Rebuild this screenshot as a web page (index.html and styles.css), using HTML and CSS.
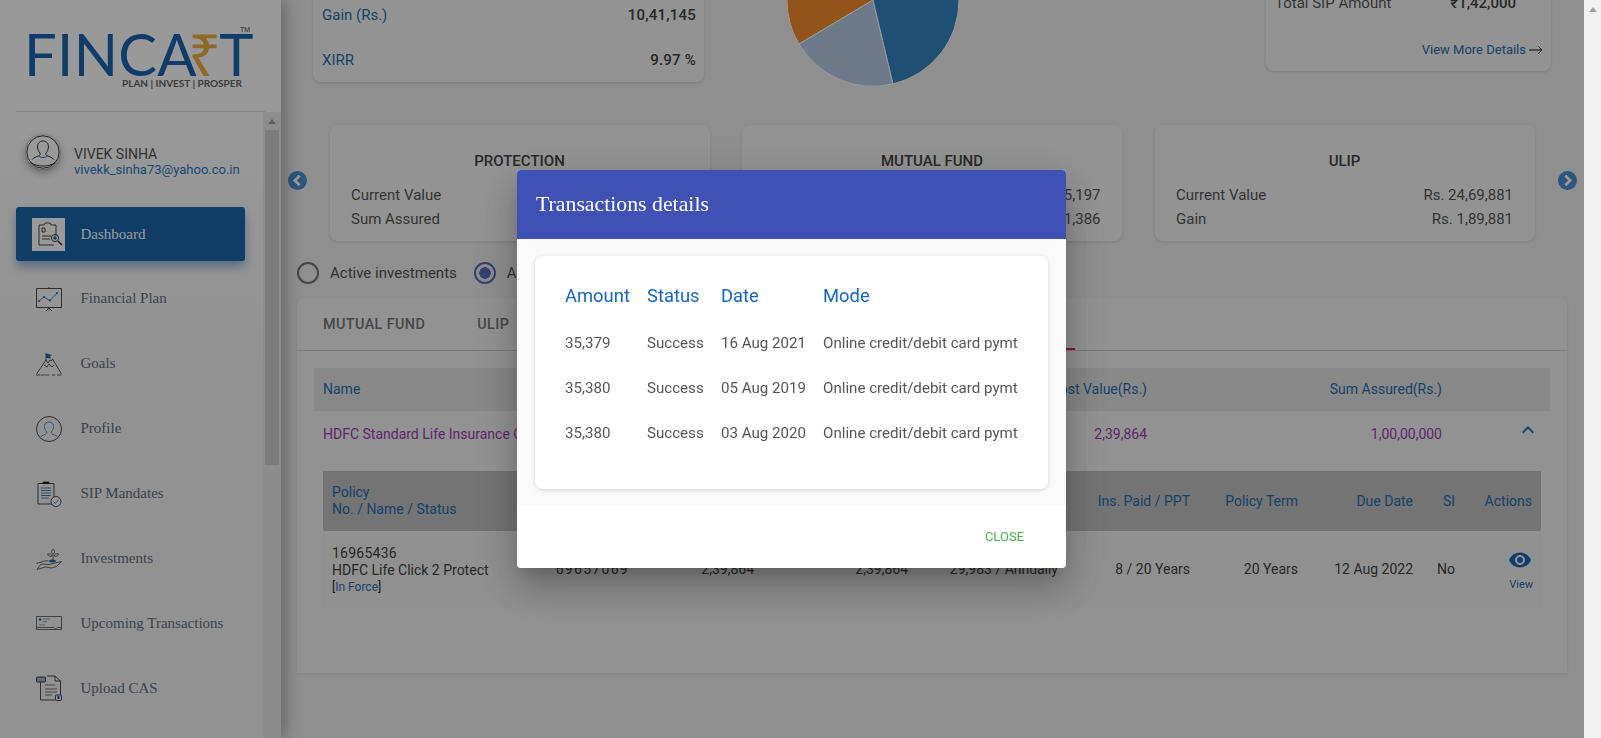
FILE: index.html
```html
<html>
<head>
  <meta name="viewport" content="width=device-width, initial-scale=1"/>
  <title>Fincart - Transactions details</title>
  <link rel="stylesheet" href="styles.css">
</head>
<body>
<div class="shell">
  <aside class="sidebar">
    <div class="logo">
      <div class="logo-mark">FINCA<span class="logo-rupee">₹</span>T<span class="logo-tm">TM</span></div>
      <div class="logo-tag">PLAN | INVEST | PROSPER</div>
    </div>
    <div class="side-body">
      <div class="side-content">
        <div class="profile">
          <div class="avatar">
            <svg viewBox="0 0 34 34" width="34" height="34" fill="none" stroke="#222" stroke-width="0.9">
              <circle cx="17" cy="17" r="16.2"/>
              <path d="M17 6c-3.6 0-5.6 2.6-5.4 6 .1 2.4 1 4.6 2.4 6 .5 1 .2 2-.8 2.6-2.6 1.2-5.4 1.6-7 4"/>
              <path d="M17 6c3.6 0 5.6 2.6 5.4 6-.1 2.4-1 4.6-2.4 6-.5 1-.2 2 .8 2.6 2.6 1.2 5.4 1.6 7 4"/>
              <path d="M13 21c1 2 7 2 8 0" stroke="#1a65ae"/>
              <path d="M5 27.500c3 2.500 7.500 3.500 12 3.500s9-1 12-3.500"/>
            </svg>
          </div>
          <div class="profile-text">
            <div class="profile-name">VIVEK SINHA</div>
            <div class="profile-mail">vivekk_sinha73@yahoo.co.in</div>
          </div>
        </div>
        <nav class="nav">
          <a class="nav-item nav-active">
            <span class="nav-tile">
              <svg viewBox="0 0 28 28" width="28" height="28" fill="none" stroke="#333" stroke-width="0.9">
                <path d="M4 5h5l1-2h5l1 2h5v11M4 5v20h15"/>
                <path d="M7 8h3v4H7zM7 16h9M7 19h8"/>
                <circle cx="20" cy="18" r="3.600"/>
                <circle cx="20" cy="18" r="1.700" fill="#1a65ae" stroke="none"/>
                <path d="M23 21l4 4" stroke-width="1.600"/>
              </svg>
            </span>
            Dashboard
          </a>
          <a class="nav-item">
            <span class="nav-icon">
              <svg viewBox="0 0 26 26" width="26" height="26" fill="none" stroke="#222" stroke-width="0.8">
                <path d="M0.500 2.500h25v19H0.500zM13 1v1.500M13 21.500v3M10 25l3-3 3 3"/>
                <path d="M3 15l5-4 6 3.500L21 7" stroke="#1a65ae"/>
                <circle cx="3" cy="15" r="1" fill="#1a65ae" stroke="none"/>
                <circle cx="8" cy="11" r="1" fill="#1a65ae" stroke="none"/>
                <circle cx="14" cy="14.500" r="1" fill="#1a65ae" stroke="none"/>
                <circle cx="21" cy="7" r="1" fill="#1a65ae" stroke="none"/>
              </svg>
            </span>
            Financial Plan
          </a>
          <a class="nav-item">
            <span class="nav-icon">
              <svg viewBox="0 0 26 26" width="26" height="26" fill="none" stroke="#333" stroke-width="0.8">
                <path d="M0.500 23L10 9V2M10 9l2 3 2-3 1.500 1 1-2 9 15"/>
                <path d="M8 14l3 2 2-3 3 3 2-2"/>
                <path d="M0 24h14M16 24h3M21 24h5" stroke-dasharray="4 0.600"/>
                <path d="M10 2.500l6 1.500-2 1.500 1 2-5-.5z" fill="#1a65ae" stroke="none"/>
              </svg>
            </span>
            Goals
          </a>
          <a class="nav-item">
            <span class="nav-icon">
              <svg viewBox="0 0 26 26" width="26" height="26" fill="none" stroke="#222" stroke-width="0.8">
                <circle cx="13" cy="13" r="12.500"/>
                <path d="M13 6c-3 0-4.500 2-4.500 4.500 0 2 .8 4 2 5.200.4 1.200-.2 2-1 2.500-1.500 1-4 1.300-5 2.800M13 6c3 0 4.500 2 4.500 4.500 0 2-.8 4-2 5.200-.4 1.200.2 2 1 2.500 1.500 1 4 1.300 5 2.800" stroke="#1a65ae" stroke-dasharray="3 0.600"/>
              </svg>
            </span>
            Profile
          </a>
          <a class="nav-item">
            <span class="nav-icon">
              <svg viewBox="0 0 26 26" width="26" height="26" fill="none" stroke="#222" stroke-width="0.8">
                <path d="M2 2.500h16v20.500H2z"/>
                <path d="M7 2.500V1h6v1.500z" fill="#222"/>
                <path d="M5 7h10M5 9.500h10M5 12h10M5 14.500h10M5 17h8" stroke="#1a65ae"/>
                <circle cx="20" cy="20.500" r="5" fill="#fff"/>
                <path d="M17.500 20.500l2 2 3-4" stroke="#1a65ae"/>
              </svg>
            </span>
            SIP Mandates
          </a>
          <a class="nav-item">
            <span class="nav-icon">
              <svg viewBox="0 0 26 26" width="26" height="26" fill="none" stroke="#333" stroke-width="0.7">
                <path d="M17 15V9M17 9c-2-1-2-3 0-5 2 2 2 4 0 5zM16 11c-2 1-4 0-4.500-2 2-.7 4 0 4.500 2zM18 11c2 1 4 0 4.500-2-2-.7-4 0-4.500 2z"/>
                <path d="M13 16c1-1.500 6-1.500 7 0-1 1.500-6 1.500-7 0z" fill="#1a65ae" stroke="#1a65ae"/>
                <path d="M0.500 18.500l5-1.500c2-1 5-1.500 7-1M5 19l8 .5 12.500-3-5 5-5 1.500-6-1-8.500 2.500z"/>
              </svg>
            </span>
            Investments
          </a>
          <a class="nav-item">
            <span class="nav-icon">
              <svg viewBox="0 0 26 26" width="26" height="26" fill="none" stroke="#333" stroke-width="0.7">
                <path d="M0.500 6.500h25v13H0.500zM0.500 17.500h17c1 0 1 1.500 2 1.500s1-1.500 2-1.500h4"/>
                <circle cx="4" cy="9.500" r="1.200" fill="#1a65ae" stroke="none"/>
                <path d="M7 9h7M7 11.500h4M3 15h6" stroke="#777"/>
              </svg>
            </span>
            Upcoming Transactions
          </a>
          <a class="nav-item">
            <span class="nav-icon">
              <svg viewBox="0 0 26 26" width="26" height="26" fill="none" stroke="#222" stroke-width="0.8">
                <path d="M4.500 4V25h15M11 1h8l5.500 5v14M19 1v5h5.500"/>
                <path d="M9 10h10M9 14h12M9 17h12M9 20h7" stroke="#555"/>
                <rect x="0.500" y="2" width="9" height="5" rx="1" fill="#9db6d0"/>
                <rect x="19.500" y="20" width="6" height="5.500" rx="1"/>
                <rect x="21.500" y="21" width="2" height="3" fill="#1a65ae" stroke="none"/>
              </svg>
            </span>
            Upload CAS
          </a>
        </nav>
      </div>
      <div class="side-track">
        <span class="track-arrow"></span>
        <div class="side-thumb"></div>
      </div>
    </div>
  </aside>

  <main class="main">
    <section class="summary">
      <div class="summary-card summary-left">
        <div class="summary-row"><span class="summary-label">Gain (Rs.)</span><b>10,41,145</b></div>
        <div class="summary-row"><span class="summary-label">XIRR</span><b>9.97 %</b></div>
      </div>
      <svg class="pie" viewBox="787 -40 172 126" width="172" height="126">
        <path d="M873 0L799 44A86 86 0 0 1 787 0V-40H873z" fill="#f38c2a" stroke="#fff"/>
        <path d="M873 0L893 84A86 86 0 0 1 799 44z" fill="#b4cbe6" stroke="#fff"/>
        <path d="M873 0V-40H959V0A86 86 0 0 1 893 84z" fill="#3485c0" stroke="#fff"/>
      </svg>
      <div class="summary-card summary-right">
        <div class="sip-row"><span>Total SIP Amount</span><b>₹1,42,000</b></div>
        <a class="more-link">View More Details
          <svg viewBox="0 0 14 10" width="14" height="10" fill="none" stroke="#111" stroke-width="1"><path d="M0 5h13M9 1l4 4-4 4"/></svg>
        </a>
      </div>
    </section>

    <section class="carousel">
      <svg class="arrow" viewBox="0 0 18 18" width="19" height="19"><circle cx="9" cy="9" r="9" fill="#4c8fd0"/><path d="M11 4.500L6.500 9l4.500 4.500" fill="none" stroke="#fff" stroke-width="2.600"/></svg>
      <div class="asset-card">
        <h3>PROTECTION</h3>
        <div class="asset-row"><span>Current Value</span><span>Rs. 2,39,864</span></div>
        <div class="asset-row"><span>Sum Assured</span><span>Rs. 1,00,00,000</span></div>
      </div>
      <div class="asset-card">
        <h3>MUTUAL FUND</h3>
        <div class="asset-row"><span>Current Value</span><span>Rs. 14,35,197</span></div>
        <div class="asset-row"><span>Gain</span><span>Rs. 8,51,386</span></div>
      </div>
      <div class="asset-card">
        <h3>ULIP</h3>
        <div class="asset-row"><span>Current Value</span><span>Rs. 24,69,881</span></div>
        <div class="asset-row"><span>Gain</span><span>Rs. 1,89,881</span></div>
      </div>
      <svg class="arrow" viewBox="0 0 18 18" width="19" height="19"><circle cx="9" cy="9" r="9" fill="#4c8fd0"/><path d="M7 4.500L11.500 9 7 13.500" fill="none" stroke="#fff" stroke-width="2.600"/></svg>
    </section>

    <section class="radios">
      <label class="radio"><span class="radio-dot"></span>Active investments</label>
      <label class="radio"><span class="radio-dot radio-on"></span>All investments</label>
    </section>

    <section class="tabs-card">
      <div class="tabs">
        <span class="tab">MUTUAL FUND</span>
        <span class="tab">ULIP</span>
        <span class="tab tab-active">PROTECTION</span>
      </div>
      <div class="tab-body">
        <div class="plan-grid plan-head">
          <span>Name</span>
          <span class="num">Cost Value(Rs.)</span>
          <span class="num">Sum Assured(Rs.)</span>
          <span></span>
        </div>
        <div class="plan-grid plan-row">
          <span>HDFC Standard Life Insurance Co. Ltd.</span>
          <span class="num">2,39,864</span>
          <span class="num">1,00,00,000</span>
          <svg class="chevron" viewBox="0 0 24 24" width="24" height="24"><path d="M12 8l-6 6 1.410 1.410L12 10.830l4.590 4.580L18 14z"/></svg>
        </div>
        <div class="policy">
          <div class="policy-grid policy-head">
            <span>Policy<br>No. / Name / Status</span>
            <span class="num">Application No.</span>
            <span class="num">Invested</span>
            <span class="num">Current Value</span>
            <span class="num">Premium / Mode</span>
            <span class="num">Ins. Paid / PPT</span>
            <span class="num">Policy Term</span>
            <span class="num">Due Date</span>
            <span class="num">SI</span>
            <span class="num">Actions</span>
          </div>
          <div class="policy-grid policy-row">
            <span><span class="policy-no">16965436</span><br>HDFC Life Click 2 Protect<br><small>[<i>In Force</i>]</small></span>
            <span class="num policy-app">69657069</span>
            <span class="num">2,39,864</span>
            <span class="num">2,39,864</span>
            <span class="num">29,983 / Annually</span>
            <span class="num">8 / 20 Years</span>
            <span class="num">20 Years</span>
            <span class="num">12 Aug 2022</span>
            <span class="num">No</span>
            <span class="view">
              <svg viewBox="0 0 24 24" width="24" height="24"><path d="M12 4.500C7 4.500 2.730 7.610 1 12c1.730 4.390 6 7.500 11 7.500s9.270-3.110 11-7.500c-1.730-4.390-6-7.500-11-7.500zM12 17c-2.760 0-5-2.240-5-5s2.240-5 5-5 5 2.240 5 5-2.240 5-5 5zm0-8c-1.660 0-3 1.340-3 3s1.340 3 3 3 3-1.340 3-3-1.340-3-3-3z"/></svg>
              View
            </span>
          </div>
        </div>
      </div>
    </section>
  </main>
  <div class="page-track"><span class="track-arrow"></span></div>
</div>

<div class="backdrop">
  <div class="modal">
    <h2 class="modal-title">Transactions details</h2>
    <div class="modal-body">
      <div class="modal-card">
        <table class="tx-table">
          <tr><th>Amount</th><th>Status</th><th>Date</th><th>Mode</th></tr>
          <tr><td>35,379</td><td>Success</td><td>16 Aug 2021</td><td>Online credit/debit card pymt</td></tr>
          <tr><td>35,380</td><td>Success</td><td>05 Aug 2019</td><td>Online credit/debit card pymt</td></tr>
          <tr><td>35,380</td><td>Success</td><td>03 Aug 2020</td><td>Online credit/debit card pymt</td></tr>
        </table>
      </div>
    </div>
    <div class="modal-foot"><a class="close-btn">CLOSE</a></div>
  </div>
</div>
</body>
</html>
```

FILE: styles.css
```css
html, body {
  margin: 0;
  height: 100%;
  overflow: hidden;
}

body {
  font-family: 'Roboto', sans-serif;
  font-size: 14px;
  color: #555;
  background: #eee;
}

.shell {
  display: flex;
  height: 738px;
  overflow: hidden;
}

/* sidebar */
.sidebar {
  width: 281px;
  flex: none;
  background: #fff;
  box-shadow: 4px 0 16px rgba(0, 0, 0, 0.3);
  position: relative;
  z-index: 2;
  display: flex;
  flex-direction: column;
}

.logo {
  height: 111px;
  margin-left: 16px;
  width: 249px;
  border-bottom: 1px solid #ddd;
}

.logo-mark {
  position: relative;
  padding: 26px 0 0 8px;
  font-family: 'Lato', sans-serif;
  font-size: 58px;
  line-height: 56px;
  letter-spacing: 0.3px;
  color: #1a65ae;
  white-space: nowrap;
}

.logo-rupee {
  color: #f0b040;
  font-family: 'Open Sans', sans-serif;
  margin: 0 -2px 0 -9px;
}

.logo-tm {
  position: absolute;
  top: 26px;
  left: 224px;
  font-size: 7px;
  line-height: 8px;
  letter-spacing: 0;
  color: #444;
  font-family: 'Liberation Sans', sans-serif;
}

.logo-tag {
  margin: -5px 0 0 106px;
  font-family: 'Lato', sans-serif;
  font-weight: bold;
  font-size: 10px;
  line-height: 12px;
  color: #666;
  white-space: nowrap;
}

.side-body {
  flex: 1;
  display: flex;
  min-height: 0;
  background: linear-gradient(#fff, #f3f3f3 300px);
}

.side-content {
  flex: 1;
  min-width: 0;
}

.side-track {
  width: 18px;
  flex: none;
  background: #ebebeb;
  display: flex;
  flex-direction: column;
  align-items: center;
}

.track-arrow {
  display: block;
  margin: 7px 0 6px;
  border: 4px solid transparent;
  border-top: 0;
  border-bottom: 5px solid #a0a0a0;
}

.side-thumb {
  width: 14px;
  height: 335px;
  background: #cfcfcf;
}

.profile {
  display: flex;
  padding: 23px 0 0 26px;
  height: 72px;
}

.avatar {
  width: 34px;
  height: 34px;
  border-radius: 50%;
  background: #fff;
  box-shadow: 0 3px 8px rgba(0, 0, 0, 0.4), 0 0 0 1px #eee;
}

.avatar svg {
  display: block;
}

.profile-text {
  margin: 11px 0 0 14px;
  line-height: 17px;
  white-space: nowrap;
}

.profile-name {
  font-size: 14px;
  color: #555;
}

.profile-mail {
  margin-top: -2px;
  font-size: 13px;
  color: #2d7cc4;
}

.nav {
  display: flex;
  flex-direction: column;
  gap: 10.9px;
  margin: 0 18px 0 16px;
}

.nav-item {
  display: flex;
  align-items: center;
  flex: none;
  height: 54px;
  font-family: 'Liberation Serif', serif;
  font-size: 15px;
  color: #667080;
  white-space: nowrap;
}

.nav-icon {
  width: 26px;
  height: 26px;
  margin: 0 18.5px 0 20px;
  flex: none;
}

.nav-icon svg,
.nav-tile svg {
  display: block;
}

.nav-active {
  background: #1a66ae;
  color: #fff;
  border-radius: 3px;
  box-shadow: 0 6px 10px rgba(26, 102, 174, 0.45);
}

.nav-tile {
  width: 33px;
  height: 33px;
  margin: 0 15.5px 0 16px;
  background: #fff;
  display: flex;
  align-items: center;
  justify-content: center;
  flex: none;
}

/* main area */
.main {
  flex: 1;
  min-width: 0;
}

.page-track {
  width: 17px;
  flex: none;
  background: #f1f1f1;
  position: relative;
  z-index: 20;
  display: flex;
  flex-direction: column;
  align-items: center;
}

.summary {
  display: flex;
  align-items: flex-start;
  margin-top: -40px;
  padding-left: 32px;
  height: 126px;
}

.summary-card {
  box-sizing: border-box;
  background: #f6f6f6;
  border-radius: 8px;
  box-shadow: 0 1px 3px rgba(0, 0, 0, 0.12);
}

.summary-left {
  width: 391px;
  height: 122px;
  padding: 32px 8px 0 9px;
}

.summary-row {
  display: flex;
  justify-content: space-between;
  align-items: center;
  height: 45px;
  font-size: 15px;
}

.summary-row b {
  font-weight: 500;
  letter-spacing: 0.2px;
  color: #444;
}

.summary-label {
  color: #2a6fb0;
}

.pie {
  margin-left: 83px;
  flex: none;
}

.summary-right {
  width: 285px;
  height: 111px;
  margin-left: 307px;
  padding: 35px 25px 0 9px;
  color: #555;
  font-size: 15px;
}

.sip-row {
  display: flex;
  justify-content: space-between;
  padding-right: 10px;
  line-height: 17px;
  height: 47px;
}

.sip-row b {
  font-weight: 500;
  color: #444;
}

.more-link {
  display: flex;
  align-items: center;
  justify-content: flex-end;
  gap: 3px;
  margin-right: -17px;
  font-size: 13px;
  line-height: 15px;
  color: #2a6fb0;
}

.carousel {
  display: flex;
  align-items: center;
  gap: 32.5px;
  margin-top: 39px;
  padding-left: 7px;
}

.arrow {
  flex: none;
  margin-top: -6px;
}

.carousel .arrow:first-child {
  margin-right: -10px;
}

.carousel .arrow:last-child {
  margin-left: -9px;
}

.asset-card {
  box-sizing: border-box;
  width: 380px;
  height: 116px;
  flex: none;
  padding: 28px 21.5px 0;
  background: #f6f6f6;
  border-radius: 8px;
  box-shadow: 0 1px 3px rgba(0, 0, 0, 0.12);
}

.asset-card h3 {
  margin: 0 0 14px;
  text-align: center;
  font-size: 15px;
  line-height: 17px;
  font-weight: 500;
  color: #444;
}

.asset-row {
  display: flex;
  justify-content: space-between;
  font-size: 15px;
  line-height: 23.5px;
}

.radios {
  display: flex;
  gap: 17px;
  margin: 20px 0 14px 16px;
  padding-top: 1px;
}

.radio {
  display: flex;
  align-items: center;
  gap: 11px;
  font-size: 15px;
  line-height: 22px;
}

.radio-dot {
  box-sizing: border-box;
  width: 22px;
  height: 22px;
  border: 2px solid #777;
  border-radius: 50%;
}

.radio-on {
  border-color: #5c6bc0;
  background: radial-gradient(circle, #5c6bc0 0 5.5px, transparent 6px);
}

.tabs-card {
  box-sizing: border-box;
  width: 1270px;
  height: 375px;
  margin-left: 16px;
  background: #f4f4f4;
  border-radius: 8px 8px 0 0;
  box-shadow: 0 1px 3px rgba(0, 0, 0, 0.1);
}

.tabs {
  display: flex;
  align-items: center;
  gap: 52px;
  height: 52px;
  padding: 0 492px 0 26px;
  border-bottom: 1px solid #ccc;
}

.tab {
  font-size: 14.4px;
  font-weight: 500;
  color: #777;
  letter-spacing: 0.4px;
}

.tab-active {
  margin-left: auto;
  padding: 0 30px;
  color: #d81b60;
  line-height: 52px;
  box-shadow: inset 0 -2px 0 #e91e63;
}

.tab-body {
  padding: 17px 17px 0;
}

.plan-grid {
  display: grid;
  grid-template-columns: 586px 247px 295px 108px;
  align-items: center;
}

.plan-head {
  box-sizing: border-box;
  height: 43px;
  padding-bottom: 2px;
  background: #e3e3e3;
  color: #2a6fb0;
  font-size: 14px;
}

.plan-head > :first-child,
.plan-row > :first-child {
  padding-left: 9px;
  white-space: nowrap;
}

.plan-row {
  height: 46px;
  color: #a13fb4;
  font-size: 14px;
}

.num {
  text-align: right;
}

.chevron {
  margin: -8px 0 0 74px;
  fill: #2a6fb0;
}

.policy {
  margin: 14px 9px 0;
}

.policy-grid {
  display: grid;
  grid-template-columns: 217px 89px 125px 154px 150px 132px 108px 115px 42px 86px;
  align-items: center;
}

.policy-head {
  height: 60px;
  background: #c1c1c1;
  color: #2a6fb0;
  line-height: 17px;
  font-size: 14px;
}

.policy-head > :first-child,
.policy-row > :first-child {
  padding-left: 9px;
}

.policy-head > :last-child,
.policy-row > :last-child {
  padding-right: 9px;
}

.policy-row {
  height: 77px;
  background: #f0f0f0;
  color: #444;
  font-size: 14px;
  line-height: 17px;
}

.policy-row > :first-child {
  padding-top: 2px;
}

.policy-no {
  letter-spacing: 0.25px;
}

.policy-app {
  letter-spacing: 1.3px;
}

.policy-row small {
  font-size: 12px;
  color: #222;
}

.policy-row i {
  font-style: normal;
  color: #2a6fb0;
}

.view {
  display: flex;
  flex-direction: column;
  align-items: flex-end;
  font-size: 11px;
  line-height: 13px;
  color: #2a6fb0;
  gap: 6px;
  margin: -1px -1px 0 0;
}

.view svg {
  display: block;
  fill: #1a65ae;
  margin-right: 1px;
}

/* dialog */
.backdrop {
  position: fixed;
  top: 0;
  left: 0;
  right: 17px;
  bottom: 0;
  z-index: 10;
  background: rgba(0, 0, 0, 0.4);
  display: flex;
  align-items: center;
  justify-content: center;
}

.modal {
  width: 549px;
  margin-right: 1px;
  border-radius: 4px;
  overflow: hidden;
  background: #fff;
  box-shadow: 0 11px 15px -7px rgba(0, 0, 0, 0.2), 0 24px 38px 3px rgba(0, 0, 0, 0.14), 0 9px 46px 8px rgba(0, 0, 0, 0.12);
}

.modal-title {
  margin: 0;
  height: 69px;
  padding-left: 19px;
  background: #3f51b5;
  color: #fff;
  font-family: 'Liberation Serif', serif;
  font-weight: normal;
  font-size: 21.8px;
  line-height: 69px;
}

.modal-body {
  padding: 17px 18px;
  background: #fafafa;
}

.modal-card {
  height: 233px;
  box-sizing: border-box;
  padding: 17px 0 0 30px;
  background: #fff;
  border-radius: 8px;
  box-shadow: 0 1px 4px rgba(0, 0, 0, 0.15);
}

.tx-table {
  border-collapse: collapse;
}

.tx-table th,
.tx-table td {
  height: 45px;
  padding: 0;
  text-align: left;
  white-space: nowrap;
  font-weight: normal;
}

.tx-table th {
  height: 47px;
  padding-bottom: 2px;
  box-sizing: border-box;
  font-size: 18.4px;
  color: #1565c0;
}

.tx-table td {
  font-size: 15.1px;
  color: #555;
}

.tx-table th:nth-child(1) { width: 82px; }
.tx-table th:nth-child(2) { width: 74px; }
.tx-table th:nth-child(3) { width: 102px; }

.modal-foot {
  display: flex;
  align-items: center;
  justify-content: flex-end;
  height: 60px;
  padding: 0 42px 2px 0;
}

.close-btn {
  font-size: 13px;
  color: #4caf50;
}
```
